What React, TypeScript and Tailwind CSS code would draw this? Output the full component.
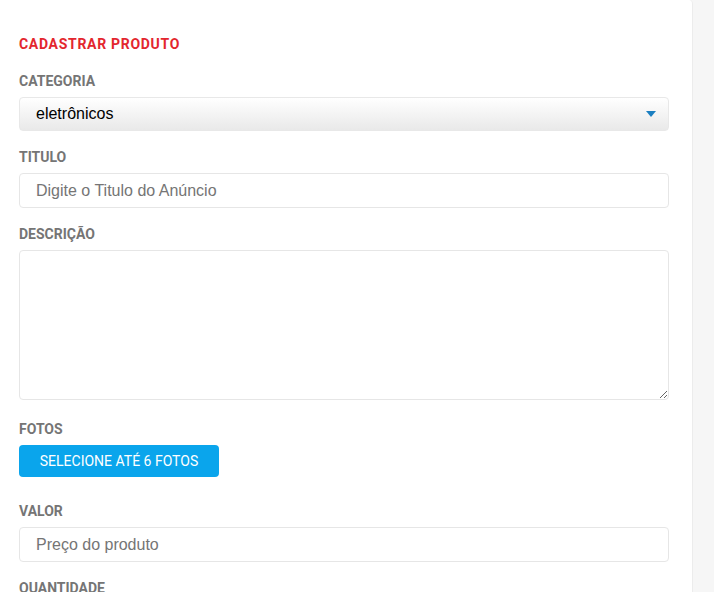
import { useState } from "react";

const labelCls =
    "block h-4 leading-4 text-[14px] font-bold uppercase text-[#757575] font-['Roboto',sans-serif] mb-[8px]";
const inputCls =
    "block w-full h-[35px] rounded-[4px] border border-[#e6e6e6] bg-white px-4 text-[16px] text-[#333] placeholder:text-[#757575] font-['Liberation_Sans',Arial,sans-serif] outline-none";

export default function App() {
    const [titulo, setTitulo] = useState("");
    const [descricao, setDescricao] = useState("");
    const [valor, setValor] = useState("");

    return (
        <div className="flex h-[592px] w-full overflow-hidden bg-[#f6f6f6]">
            {/* form panel */}
            <div className="w-[693px] shrink-0 bg-white rounded-tr-[4px] border-r border-[#ececec] pl-[19px] pr-[23px] pt-[36px]">
                <h2 className="h-4 leading-4 text-[14px] font-bold tracking-[0.7px] text-[#e3262e] font-['Roboto',sans-serif]">
                    CADASTRAR PRODUTO
                </h2>

                {/* Categoria */}
                <div className="mt-[21px]">
                    <label className={labelCls}>Categoria</label>
                    <div className="flex h-[34px] items-center justify-between rounded-[4px] border border-[#e8e8e8] bg-gradient-to-b from-white to-[#e9e9e9] pl-4 pr-[12px] text-[16px] text-black font-['Liberation_Sans',Arial,sans-serif]">
                        <span>eletrônicos</span>
                        <svg width="10" height="6" viewBox="0 0 10 6">
                            <path d="M0 0h10L5 6z" fill="#1b7fc1" />
                        </svg>
                    </div>
                </div>

                {/* Titulo */}
                <div className="mt-[18px]">
                    <label className={labelCls}>Titulo</label>
                    <input
                        className={inputCls}
                        placeholder="Digite o Titulo do Anúncio"
                        value={titulo}
                        onChange={(e) => setTitulo(e.target.value)}
                    />
                </div>

                {/* Descricao */}
                <div className="mt-[18px]">
                    <label className={labelCls}>Descrição</label>
                    <textarea
                        className="block w-full h-[150px] rounded-[4px] border border-[#e6e6e6] bg-white px-4 py-2 text-[16px] font-['Liberation_Sans',Arial,sans-serif] outline-none"
                        value={descricao}
                        onChange={(e) => setDescricao(e.target.value)}
                    />
                </div>

                {/* Fotos */}
                <div className="mt-[21px]">
                    <label className={labelCls}>Fotos</label>
                    <button className="h-[32px] w-[200px] rounded-[4px] bg-[#0aa5ec] text-[14px] font-normal text-white font-['Roboto',sans-serif]">
                        SELECIONE ATÉ 6 FOTOS
                    </button>
                </div>

                {/* Valor */}
                <div className="mt-[26px]">
                    <label className={labelCls}>Valor</label>
                    <input
                        className={inputCls}
                        placeholder="Preço do produto"
                        value={valor}
                        onChange={(e) => setValor(e.target.value)}
                    />
                </div>

                {/* Quantidade */}
                <div className="mt-[18px]">
                    <label className={labelCls}>Quantidade</label>
                </div>
            </div>
            <div className="flex-1" />
        </div>
    );
}
